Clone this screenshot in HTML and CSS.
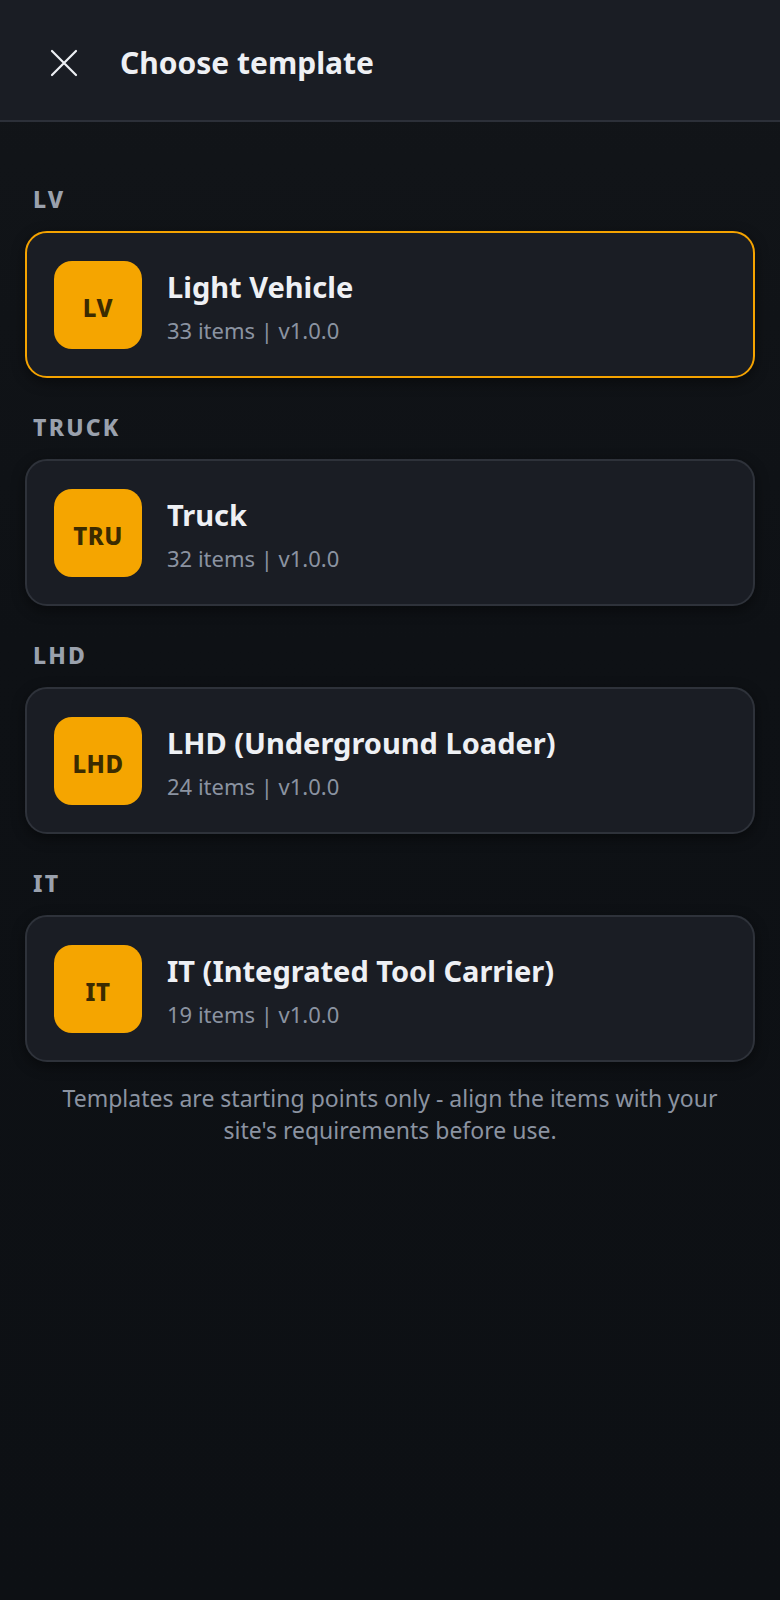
FILE: index.html
```html
<!DOCTYPE html>
<html lang="en">
<head>
    <meta charset="UTF-8">
    <meta name="viewport" content="width=device-width, initial-scale=1.0">
    <title>Choose template</title>
    <link rel="stylesheet" href="styles.css">
</head>
<body>
    <header class="topbar">
        <button class="close-btn" aria-label="Close">
            <svg width="28" height="28" viewBox="0 0 28 28" fill="none" stroke="currentColor" stroke-width="2.2" stroke-linecap="round">
                <path d="M2 2 L26 26 M26 2 L2 26"/>
            </svg>
        </button>
        <h1 class="topbar-title">Choose template</h1>
    </header>

    <main class="content">
        <section class="group">
            <div class="group-label">LV</div>
            <div class="card selected">
                <div class="badge">LV</div>
                <div class="card-text">
                    <div class="card-title">Light Vehicle</div>
                    <div class="card-meta">33 items | v1.0.0</div>
                </div>
            </div>
        </section>

        <section class="group">
            <div class="group-label">TRUCK</div>
            <div class="card">
                <div class="badge">TRU</div>
                <div class="card-text">
                    <div class="card-title">Truck</div>
                    <div class="card-meta">32 items | v1.0.0</div>
                </div>
            </div>
        </section>

        <section class="group">
            <div class="group-label">LHD</div>
            <div class="card">
                <div class="badge">LHD</div>
                <div class="card-text">
                    <div class="card-title">LHD (Underground Loader)</div>
                    <div class="card-meta">24 items | v1.0.0</div>
                </div>
            </div>
        </section>

        <section class="group">
            <div class="group-label">IT</div>
            <div class="card">
                <div class="badge">IT</div>
                <div class="card-text">
                    <div class="card-title">IT (Integrated Tool Carrier)</div>
                    <div class="card-meta">19 items | v1.0.0</div>
                </div>
            </div>
        </section>

        <p class="note">Templates are starting points only - align the items with your site's requirements before use.</p>
    </main>
</body>
</html>
```

FILE: styles.css
```css
body {
    font-family: 'Noto Sans', 'Open Sans', sans-serif;
    margin: 0;
    padding: 0;
    min-height: 1600px;
    background: linear-gradient(180deg, #121519 0%, #0e1115 40%, #0d1014 100%);
    color: #eef0f4;
}
.topbar {
    height: 122px;
    box-sizing: border-box;
    display: flex;
    align-items: center;
    padding: 5px 0 0 50px;
    background-color: #1a1d24;
    border-bottom: 2px solid #2c3039;
}
.close-btn {
    background: none;
    border: none;
    padding: 0;
    width: 28px;
    height: 28px;
    color: #eef0f4;
    display: flex;
    cursor: pointer;
}
.topbar-title {
    margin: 0 0 0 42px;
    font-size: 30px;
    font-weight: 700;
    color: #eef0f4;
}
.content {
    padding: 28px 25px 40px;
}
.group {
    margin-top: 35px;
}
.group-label {
    padding-left: 8px;
    font-size: 23px;
    line-height: 28px;
    font-weight: 800;
    letter-spacing: 2.2px;
    color: #9aa1ad;
    margin-bottom: 18px;
}
.card {
    display: flex;
    align-items: center;
    gap: 25px;
    height: 147px;
    box-sizing: border-box;
    padding: 4px 27px 0;
    background-color: #1a1d24;
    border: 2px solid #2e323a;
    border-radius: 22px;
    box-shadow: 0 4px 14px rgba(0, 0, 0, 0.45);
}
.card.selected {
    border-color: #f5a300;
}
.badge {
    width: 88px;
    height: 88px;
    flex-shrink: 0;
    margin-top: -4px;
    border-radius: 18px;
    background-color: #f5a500;
    color: #3b2b00;
    font-size: 24px;
    font-weight: 800;
    letter-spacing: 0.5px;
    display: flex;
    align-items: center;
    justify-content: center;
    padding-top: 6px;
    box-sizing: border-box;
}
.card-text {
    display: flex;
    flex-direction: column;
    gap: 10px;
}
.card-title {
    font-size: 29px;
    line-height: 36px;
    font-weight: 700;
    color: #eef0f4;
}
.card-meta {
    font-size: 22px;
    line-height: 30px;
    color: #8b93a1;
}
.note {
    margin: 20px 28px 0;
    text-align: center;
    font-size: 23px;
    line-height: 32px;
    color: #8b93a1;
}
```
